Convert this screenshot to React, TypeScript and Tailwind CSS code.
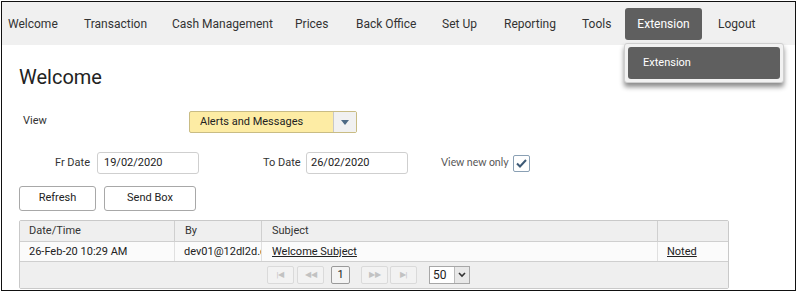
import React from 'react';

const menu: [string, string][] = [
  ['Welcome', 'w-[76px]'],
  ['Transaction', 'w-[88px]'],
  ['Cash Management', 'w-[123px]'],
  ['Prices', 'w-[61px]'],
  ['Back Office', 'w-[86px]'],
  ['Set Up', 'w-[62px]'],
  ['Reporting', 'w-[78px]'],
  ['Tools', 'w-[43px]'],
];

function PagerBtn({ label, active }: { label: string; active?: boolean }) {
  return (
    <div
      className={
        'flex h-[18px] items-center justify-center rounded-[2px] border text-[8px] ' +
        (active ? 'w-[19px] border-[#9a9a9a] bg-[#f4f4f4] text-[11px] text-[#222]' : 'w-[27px] border-[#dadada] bg-[#f2f2f2] text-[#c2c2c2]')
      }
    >
      {label}
    </div>
  );
}

export default function App(): JSX.Element {
  return (
    <div className="h-[294px] w-[798px] bg-white p-px font-['Roboto',sans-serif] text-[#333]">
      <div className="relative h-[290px] w-[795px] border-[1.5px] border-[#111] bg-white">
        {/* top menu */}
        <nav className="flex h-[43px] items-center whitespace-nowrap bg-[#f0f0f0] pl-[6px] text-[12px] text-[#333]">
          {menu.map(([m, w]) => (
            <span key={m} className={w}>
              {m}
            </span>
          ))}
          <span className="flex h-[32px] w-[77px] items-center justify-center rounded-[3px] bg-[#5f5f5f] text-white">
            Extension
          </span>
          <span className="ml-[16px]">Logout</span>
        </nav>

        {/* dropdown */}
        <div className="absolute left-[622px] top-[41px] w-[160px] rounded-[3px] border border-[#cfcfcf] bg-[#f2f2f2] p-[3px] shadow-[0_4px_5px_rgba(0,0,0,0.45)]">
          <div className="flex h-[32px] items-center rounded-[3px] bg-[#5f5f5f] pl-[15px] text-[11px] text-white">
            Extension
          </div>
        </div>

        <div className="pl-[17px] pt-[20px]">
          <h1 className="text-[20px] leading-[24px] text-[#222]">Welcome</h1>

          <div className="mt-[22px] flex items-center text-[11px]">
            <span className="ml-[4px] w-[166px] pb-[2px]">View</span>
            <div className="flex h-[22px] w-[168px] rounded-[2px] border border-[#c9bc84] bg-[#fdeca4]">
              <span className="flex-1 pl-[10px] leading-[20px] text-[#222]">Alerts and Messages</span>
              <span className="flex w-[23px] items-center justify-center border-l border-[#c8c8c8] bg-[#f1f1f1]">
                <svg width="8" height="5" viewBox="0 0 8 5">
                  <path d="M0 0h8L4 5z" fill="#4e6a85" />
                </svg>
              </span>
            </div>
          </div>

          <div className="mt-[19px] flex items-center text-[11px]">
            <span className="w-[78px] pr-[7px] text-right">Fr Date</span>
            <div className="h-[22px] w-[102px] rounded-[3px] border border-[#cfcfcf] pl-[6px] leading-[20px] text-[#222]">19/02/2020</div>
            <span className="ml-[64px] w-[43px]">To Date</span>
            <div className="h-[22px] w-[102px] rounded-[3px] border border-[#cfcfcf] pl-[4px] leading-[20px] text-[#222]">26/02/2020</div>
            <span className="ml-[33px] font-['Lato',sans-serif] text-[10.5px] text-[#555]">View new only</span>
            <span className="ml-[4px] flex h-[17px] w-[17px] items-center justify-center rounded-[2px] border border-[#8aa0b4] bg-white">
              <svg width="11" height="9" viewBox="0 0 11 9">
                <path d="M1 4.5l3 3 6-6.5" fill="none" stroke="#3d5a76" strokeWidth="2" />
              </svg>
            </span>
          </div>

          <div className="mt-[12px] flex gap-[8px] text-[11px]">
            <button className="h-[25px] w-[77px] rounded-[3px] border border-[#a8a8a8] bg-white text-[#222]">Refresh</button>
            <button className="h-[25px] w-[92px] rounded-[3px] border border-[#a8a8a8] bg-white text-[#222]">Send Box</button>
          </div>

          <div className="mt-[9px] w-[710px] rounded-[2px] border border-[#c9c9c9] text-[11px]">
            <div className="flex h-[20px] bg-[#efefef] leading-[20px]">
              <span className="w-[155px] border-r border-[#cfcfcf] pl-[9px]">Date/Time</span>
              <span className="w-[87px] border-r border-[#cfcfcf] pl-[10px]">By</span>
              <span className="w-[396px] border-r border-[#cfcfcf] pl-[10px]">Subject</span>
              <span className="flex-1" />
            </div>
            <div className="flex h-[20px] border-t border-[#cfcfcf] bg-[#fbfbfb] leading-[19px] text-[#222]">
              <span className="w-[155px] border-r border-[#e0e0e0] pl-[9px]">26-Feb-20 10:29 AM</span>
              <span className="w-[87px] overflow-hidden whitespace-nowrap border-r border-[#e0e0e0] pl-[9px]">dev01@12dl2d.c</span>
              <span className="w-[396px] border-r border-[#e0e0e0] pl-[10px] underline">Welcome Subject</span>
              <span className="flex-1 pl-[9px] underline">Noted</span>
            </div>
            <div className="flex h-[27px] items-center border-t border-[#cfcfcf] bg-[#efefef] pl-[247px]">
              <PagerBtn label="|◀" />
              <span className="w-[3px]" />
              <PagerBtn label="◀◀" />
              <span className="w-[7px]" />
              <PagerBtn label="1" active />
              <span className="w-[11px]" />
              <PagerBtn label="▶▶" />
              <span className="w-[2px]" />
              <PagerBtn label="▶|" />
              <div className="ml-[12px] flex h-[18px] w-[41px] border border-[#a7a7a7] bg-white text-[12px]">
                <span className="flex-1 pl-[3px] leading-[16px] text-[#222]">50</span>
                <span className="flex w-[15px] items-center justify-center border-l border-[#bbb] bg-[#e8e8e8]">
                  <svg width="8" height="6" viewBox="0 0 8 6">
                    <path d="M1 1l3 3 3-3" fill="none" stroke="#333" strokeWidth="1.6" />
                  </svg>
                </span>
              </div>
            </div>
          </div>
        </div>
      </div>
    </div>
  );
}
